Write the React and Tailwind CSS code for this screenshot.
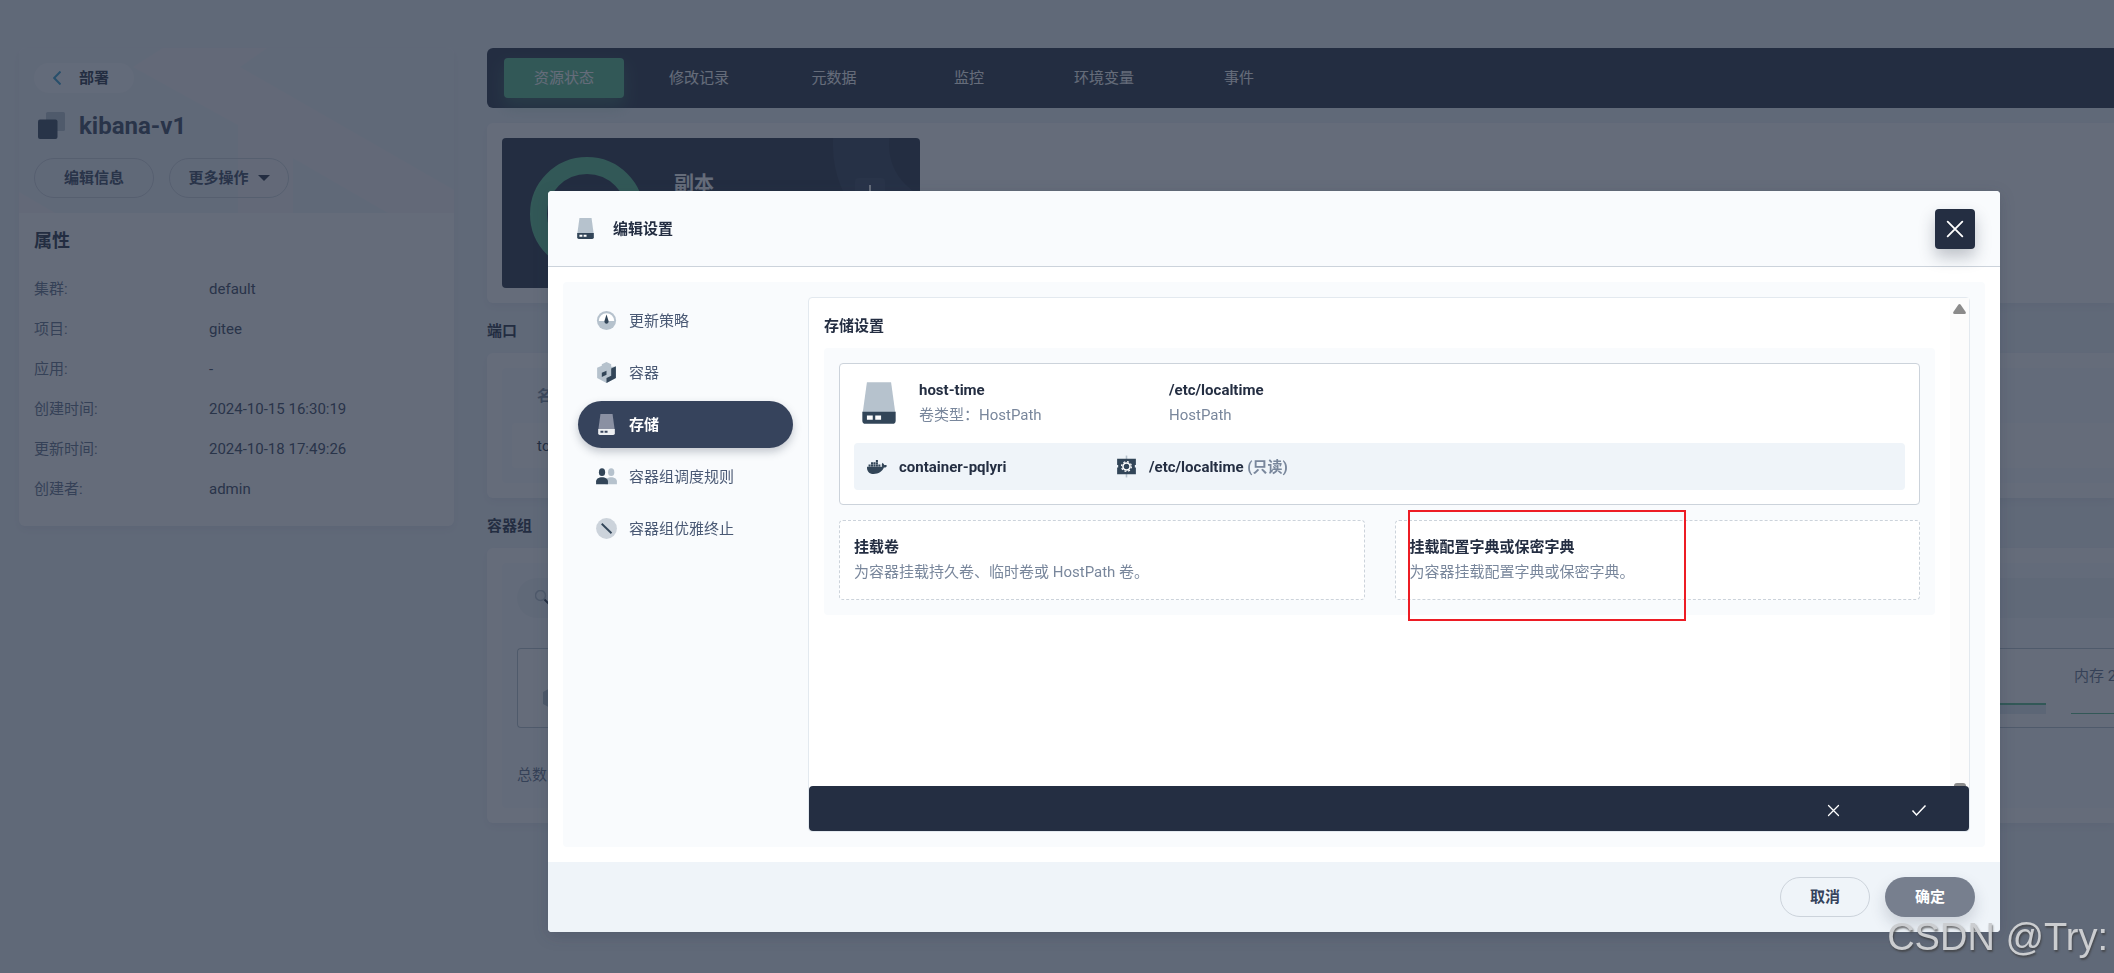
import React, { useState } from "react";
import { FaDocker } from "react-icons/fa";

const tabs = ["资源状态", "修改记录", "元数据", "监控", "环境变量", "事件"];

const attributes = [
  { label: "集群", value: "default" },
  { label: "项目", value: "gitee" },
  { label: "应用", value: "-" },
  { label: "创建时间", value: "2024-10-15 16:30:19" },
  { label: "更新时间", value: "2024-10-18 17:49:26" },
  { label: "创建者", value: "admin" },
];

const StorageIcon = ({ className, light }) => (
  <svg viewBox="0 0 24 24" className={className}>
    <path d="M6.2 2h11.6l2 14.5H4.2z" fill={light ? "#8a90a2" : "#b6c2cd"} />
    <path
      d="M4 16.2h16v4.3a1.5 1.5 0 0 1-1.5 1.5h-13A1.5 1.5 0 0 1 4 20.500z"
      fill={light ? "#eceef1" : "#324558"}
    />
    <path
      d="M6.200 18h2.800v2H6.200zM10.200 18h2.800v2h-2.800z"
      fill={light ? "#36435c" : "#ffffff"}
    />
  </svg>
);

const StrategyIcon = ({ className }) => (
  <svg viewBox="0 0 24 24" className={className}>
    <circle cx="12" cy="12" r="9.200" fill="#b6c2cd" />
    <path d="M4.600 12.500a7.400 7.400 0 0 1 14.800 0z" fill="#ffffff" />
    <path d="M12 6.200l2 6.300c.3 1.300-.7 2.500-2 2.500s-2.300-1.200-2-2.500z" fill="#324558" />
  </svg>
);

const ContainerIcon = ({ className }) => (
  <svg viewBox="0 0 24 24" className={className}>
    <path d="M12 2l4.500 2v2.500L21 6.500v10.800L12 22l-9-4.700V7.500l4.500-2V4z" fill="#b6c2cd" />
    <path d="M21 6v11.300L12 22v-4.800l4.500-2.200V8.200z" fill="#324558" />
    <path d="M7.500 12.200l4.500-2v4l-4.500 2z" fill="#324558" />
  </svg>
);

const GroupIcon = ({ className }) => (
  <svg viewBox="0 0 24 24" className={className}>
    <ellipse cx="16.500" cy="7.800" rx="3" ry="3.700" fill="#b6c2cd" />
    <path d="M11 19.500v-2.700c0-2.500 2.500-4 5.500-4s5.500 1.500 5.500 4v2.700z" fill="#b6c2cd" />
    <ellipse cx="7.700" cy="7.800" rx="3" ry="3.700" fill="#324558" />
    <path d="M2 19.500v-2.700c0-2.500 2.500-4 5.700-4s5.700 1.500 5.700 4v2.700z" fill="#324558" />
  </svg>
);

const TerminateIcon = ({ className }) => (
  <svg viewBox="0 0 24 24" className={className}>
    <circle cx="12" cy="12" r="10" fill="#ccd3db" />
    <path d="M7.400 7.400l9.400 9.200" stroke="#324558" strokeWidth="1.800" />
  </svg>
);

const MountIcon = ({ className }) => (
  <svg viewBox="0 0 24 24" className={className}>
    <path d="M12 1.500v21" stroke="#b6c2cd" strokeWidth="1.500" />
    <path d="M3 4.500h18v6h-1v2.500h1v6.500H3V13h1v-2.500H3z" fill="#324558" />
    <circle cx="12" cy="12" r="4.700" fill="none" stroke="#ffffff" strokeWidth="1.200" strokeDasharray="1.850 1.841" />
    <circle cx="12" cy="12" r="3.400" fill="#324558" stroke="#ffffff" strokeWidth="1.500" />
  </svg>
);

const CloseIcon = ({ className }) => (
  <svg viewBox="0 0 24 24" className={className} fill="none" stroke="currentColor" strokeWidth="2" strokeLinecap="round">
    <path d="M4 4l16 16M20 4L4 20" />
  </svg>
);

const menus = [
  { name: "更新策略", Icon: StrategyIcon },
  { name: "容器", Icon: ContainerIcon },
  { name: "存储", Icon: StorageIcon },
  { name: "容器组调度规则", Icon: GroupIcon },
  { name: "容器组优雅终止", Icon: TerminateIcon },
];

const Sidebar = () => (
  <aside className="w-[435px] shrink-0 self-start rounded-md bg-white shadow-[0_4px_8px_rgba(36,46,66,0.06)]">
    <div className="relative overflow-hidden rounded-t-md bg-[#eff4f9] p-[15px]">
      <svg viewBox="0 0 435 165" className="absolute inset-0 h-full w-full" fill="#f8f6f7">
        <path d="M114 19L144 0h104l-27 19 214 123v23h-66l-95-55v55h-55V77z" />
        <path d="M0 144l36 21H0z" />
      </svg>
      <div className="relative">
        <a href="#deployments" className="flex h-[30px] w-[100px] items-center rounded-full bg-[#f9fbfd] pl-[19px] font-bold text-[#242e42]">
          <svg viewBox="0 0 8 14" className="mr-[18px] h-[14px] w-2" fill="none" stroke="#329dce" strokeWidth="2">
            <path d="M7.500 0.500L1.200 7l6.300 6.500" />
          </svg>
          部署
        </a>
        <div className="mt-[15px] flex h-[35px] items-center">
          <svg viewBox="0 0 27 27" className="ml-1 mr-[14px] h-[27px] w-[27px]">
            <rect x="8" width="19" height="19" rx="1.500" fill="#b6c2cd" />
            <rect y="7.500" width="19.500" height="19.500" rx="2" fill="#324558" />
          </svg>
          <h1 className="text-2xl font-bold text-[#36435c]">kibana-v1</h1>
        </div>
        <div className="mt-[15px] flex gap-[15px]">
          <button className="h-10 w-[120px] rounded-full border border-[#ccd3db] font-bold text-[#36435c]">
            编辑信息
          </button>
          <button className="flex h-10 w-[120px] items-center justify-center gap-[9px] rounded-full border border-[#ccd3db] font-bold text-[#36435c]">
            更多操作
            <svg viewBox="0 0 12 6" className="h-[6px] w-3" fill="#242e42">
              <path d="M0 0h12L6 6z" />
            </svg>
          </button>
        </div>
      </div>
    </div>
    <div className="px-[15px] pb-[17px] pt-4">
      <h2 className="text-lg leading-6 font-bold text-[#242e42]">属性</h2>
      <dl className="mt-4">
        {attributes.map((item) => (
          <div key={item.label} className="flex h-10 items-center">
            <dt className="w-[175px] text-[#5f708a]">{item.label}:</dt>
            <dd className="text-[#36435c]">{item.value}</dd>
          </div>
        ))}
      </dl>
    </div>
  </aside>
);

const ReplicaCard = () => (
  <div className="relative h-[150px] w-[418px] overflow-hidden rounded bg-[#242e42]">
    <svg viewBox="0 0 418 150" className="absolute inset-0 h-full w-full" fill="none">
      <circle cx="443" cy="7" r="84" stroke="#36435c" strokeOpacity="0.600" strokeWidth="56" />
      <circle cx="85" cy="76" r="48.500" stroke="#55bc8a" strokeWidth="17" />
    </svg>
    <div className="relative flex items-start justify-between pl-[172px] pr-[35px] pt-8">
      <span className="text-xl font-bold text-white">副本</span>
      <button aria-label="增加副本" className="mt-2 flex h-[30px] w-[30px] justify-center rounded bg-[#36435c] pt-[7px]">
        <svg viewBox="0 0 16 16" className="h-4 w-4" stroke="#ffffff" strokeWidth="2">
          <path d="M8 0v16M0 8h16" />
        </svg>
      </button>
    </div>
  </div>
);

const ResourceStatus = () => (
  <main className="min-w-0 flex-1">
    <nav className="flex h-[60px] items-center gap-[15px] rounded-l-md bg-[#242e42] px-[17px]">
      {tabs.map((tab, index) => (
        <button
          key={tab}
          className={
            index === 0
              ? "h-10 w-[120px] rounded bg-[#55bc8a] text-white shadow-[0_8px_16px_rgba(85,188,138,0.35)]"
              : "h-10 w-[120px] rounded text-white"
          }
        >
          {tab}
        </button>
      ))}
    </nav>

    <section className="mt-[15px] rounded-l-md bg-white p-[15px] shadow-[0_4px_8px_rgba(36,46,66,0.06)]">
      <ReplicaCard />
    </section>

    <h3 className="mt-4 leading-6 font-bold text-[#242e42]">端口</h3>
    <section className="mt-[10px] rounded-l-md bg-white py-[15px] pl-[15px] shadow-[0_4px_8px_rgba(36,46,66,0.06)]">
      <div className="rounded-l bg-[#f9fbfd] pb-[15px] pl-[10px]">
        <div className="flex h-[55px] items-center pl-[25px] font-bold text-[#79879c]">名称</div>
        <div className="flex h-[45px] items-center rounded-l bg-white pl-[25px] text-[#242e42]">tcp</div>
      </div>
    </section>

    <h3 className="mt-4 leading-6 font-bold text-[#242e42]">容器组</h3>
    <section className="mt-[10px] rounded-l-md bg-white py-[15px] pl-[15px] shadow-[0_4px_8px_rgba(36,46,66,0.06)]">
      <div className="rounded-l bg-[#f9fbfd] py-[15px] pl-[15px]">
        <div className="flex h-10 items-center rounded-l-full bg-[#eff4f9] pl-[18px]">
          <svg viewBox="0 0 16 16" className="h-4 w-4" fill="none">
            <circle cx="5.500" cy="5.500" r="5" stroke="#b6c2cd" strokeWidth="1.500" />
            <path d="M9.500 9.500l5 5" stroke="#242e42" strokeWidth="2" />
          </svg>
        </div>
        <div className="mt-[30px] flex h-20 items-center justify-between overflow-hidden rounded-l border border-r-0 border-[#b6c2cd] bg-white pt-1 pl-[25px]">
          <svg viewBox="3 2 18 20" className="mt-4 h-6 w-6" preserveAspectRatio="xMinYMid meet" fill="#b6c2cd">
            <path d="M12 2l9 5v10l-9 5-9-5V7z" />
          </svg>
          <div className="flex items-end gap-[25px]">
            <div className="h-[11px] w-[110px] border-t-2 border-[#55bc8a] bg-[#dfeaf0]" />
            <div className="w-[43px] border-b border-[#55bc8a] pb-[27px] pl-[3px] whitespace-nowrap text-[#5f708a]">
              内存 2
            </div>
          </div>
        </div>
        <p className="mt-[34px] mb-[5px] leading-[26px] text-[#5f708a]">总数</p>
      </div>
    </section>
  </main>
);

const StoragePanel = () => (
  <section className="flex min-w-0 flex-1 flex-col rounded border border-[#e3e9ef] bg-white">
    <div className="flex min-h-0 flex-1">
      <div className="min-w-0 flex-1 p-[15px]">
        <h3 className="mb-[9px] leading-[26px] font-bold text-[#242e42]">存储设置</h3>
        <div className="rounded bg-[#f9fbfd] p-[15px]">
          <div className="rounded border border-[#ccd3db] bg-white p-[14px]">
            <div className="flex gap-[15px]">
              <StorageIcon className="h-[50px] w-[50px]" />
              <div className="w-[235px] leading-[25px]">
                <p className="font-bold text-[#242e42]">host-time</p>
                <p className="text-[#79879c]">卷类型：HostPath</p>
              </div>
              <div className="leading-[25px]">
                <p className="font-bold text-[#242e42]">/etc/localtime</p>
                <p className="text-[#79879c]">HostPath</p>
              </div>
            </div>
            <div className="mt-[15px] flex h-[47px] items-center rounded bg-[#eff4f9] px-[10px] font-bold text-[#242e42]">
              <div className="flex w-[250px] items-center gap-[10px]">
                <span className="flex w-[25px] justify-center">
                  <FaDocker size={20} color="#324558" />
                </span>
                container-pqlyri
              </div>
              <div className="flex items-center gap-[10px]">
                <MountIcon className="h-[25px] w-[25px]" />
                <span>
                  /etc/localtime <span className="text-[#79879c]">(只读)</span>
                </span>
              </div>
            </div>
          </div>
          <div className="mt-[15px] grid grid-cols-2 gap-[30px]">
            <button className="rounded border border-dashed border-[#ccd3db] bg-white p-[14px] text-left leading-[25px]">
              <strong className="block text-[#242e42]">挂载卷</strong>
              <span className="text-[#79879c]">为容器挂载持久卷、临时卷或 HostPath 卷。</span>
            </button>
            <button className="relative rounded border border-dashed border-[#ccd3db] bg-white p-[14px] text-left leading-[25px]">
              <strong className="block text-[#242e42]">挂载配置字典或保密字典</strong>
              <span className="text-[#79879c]">为容器挂载配置字典或保密字典。</span>
              <span className="absolute -top-[11px] left-3 h-[111px] w-[278px] border-2 border-[#ed1c24]" />
            </button>
          </div>
        </div>
      </div>
      {/* scroll track */}
      <div className="flex w-[19px] flex-col items-center justify-between bg-[#fcfcfc] pt-[6px]">
        <svg viewBox="0 0 13 10" className="h-[10px] w-[13px]" fill="#8b8b8b">
          <path d="M5.300 0.700Q6.500-0.700 7.700 0.700L12.700 8Q13.300 10 11.500 10h-10Q-.3 10 .3 8z" />
        </svg>
        <div className="h-[3px] w-3 rounded-t-sm bg-[#8b8b8b]" />
      </div>
    </div>
    <div className="flex h-[45px] items-center justify-end gap-[70px] rounded bg-[#242e42] pr-[42px] pt-[3px] text-white">
      <button aria-label="取消编辑">
        <CloseIcon className="h-[15px] w-[15px]" />
      </button>
      <button aria-label="保存编辑">
        <svg viewBox="0 0 16 16" className="h-4 w-4" fill="none" stroke="currentColor" strokeWidth="1.500">
          <path d="M1.500 8.500l4 4.500 9-9.500" />
        </svg>
      </button>
    </div>
  </section>
);

const EditModal = () => {
  const [active, setActive] = useState("存储");

  return (
    <div className="fixed inset-0 flex bg-[rgba(36,46,66,0.7)] pb-[41px] pl-[548px] pr-[114px] pt-[191px]">
      <div role="dialog" className="flex min-w-0 flex-1 flex-col overflow-hidden rounded bg-white shadow-[0_4px_16px_rgba(36,46,66,0.2)]">
        {/* Header */}
        <header className="flex h-[76px] shrink-0 items-center border-b border-[#ccd3db] bg-[#f9fbfd] px-[25px]">
          <StorageIcon className="h-[25px] w-[25px]" />
          <h2 className="ml-[15px] flex-1 font-bold text-[#242e42]">编辑设置</h2>
          <button
            aria-label="关闭"
            className="flex h-10 w-10 items-center justify-center rounded bg-[#242e42] text-white shadow-[0_8px_16px_rgba(36,46,66,0.28)]"
          >
            <CloseIcon className="h-[22px] w-[22px]" />
          </button>
        </header>

        {/* Body */}
        <div className="flex min-h-0 flex-1 p-[15px]">
          <div className="flex min-w-0 flex-1 gap-[15px] rounded bg-[#f9fbfd] p-[15px]">
            <ul className="flex w-[215px] shrink-0 flex-col gap-[5px]">
              {menus.map(({ name, Icon }) => (
                <li key={name}>
                  <button
                    onClick={() => setActive(name)}
                    className={
                      name === active
                        ? "flex h-[47px] w-full items-center gap-[10px] rounded-full bg-[#36435c] px-4 font-bold text-white shadow-[0_4px_8px_rgba(36,46,66,0.25)]"
                        : "flex h-[47px] w-full items-center gap-[10px] rounded-full px-4 text-[#4a5974]"
                    }
                  >
                    <Icon className="h-[25px] w-[25px]" light={name === active} />
                    {name}
                  </button>
                </li>
              ))}
            </ul>
            <StoragePanel />
          </div>
        </div>

        {/* Footer */}
        <footer className="flex h-[70px] shrink-0 items-center justify-end gap-[15px] bg-[#eff4f9] px-[25px]">
          <button className="h-10 w-[90px] rounded-full border border-[#ccd3db] font-bold text-[#36435c]">取消</button>
          <button className="h-10 w-[90px] rounded-full bg-[#777f8e] font-bold text-white shadow-[0_8px_16px_rgba(36,46,66,0.18)]">
            确定
          </button>
        </footer>
      </div>
    </div>
  );
};

const App = () => {
  return (
    <div className="min-h-screen overflow-hidden bg-[#eff4f9] font-[Roboto,'Noto_Sans_CJK_SC',sans-serif] text-[15px] leading-5">
      <div className="flex gap-[33px] pl-[19px] pt-12">
        <Sidebar />
        <ResourceStatus />
      </div>
      <EditModal />
      <span className="fixed bottom-[13px] right-[6px] font-['Liberation_Sans',sans-serif] text-[38px] leading-[46px] text-[#cbcdd0] [text-shadow:1px_2px_2px_rgba(60,60,60,0.7)]">
        CSDN @Try:
      </span>
    </div>
  );
};

export default App;
